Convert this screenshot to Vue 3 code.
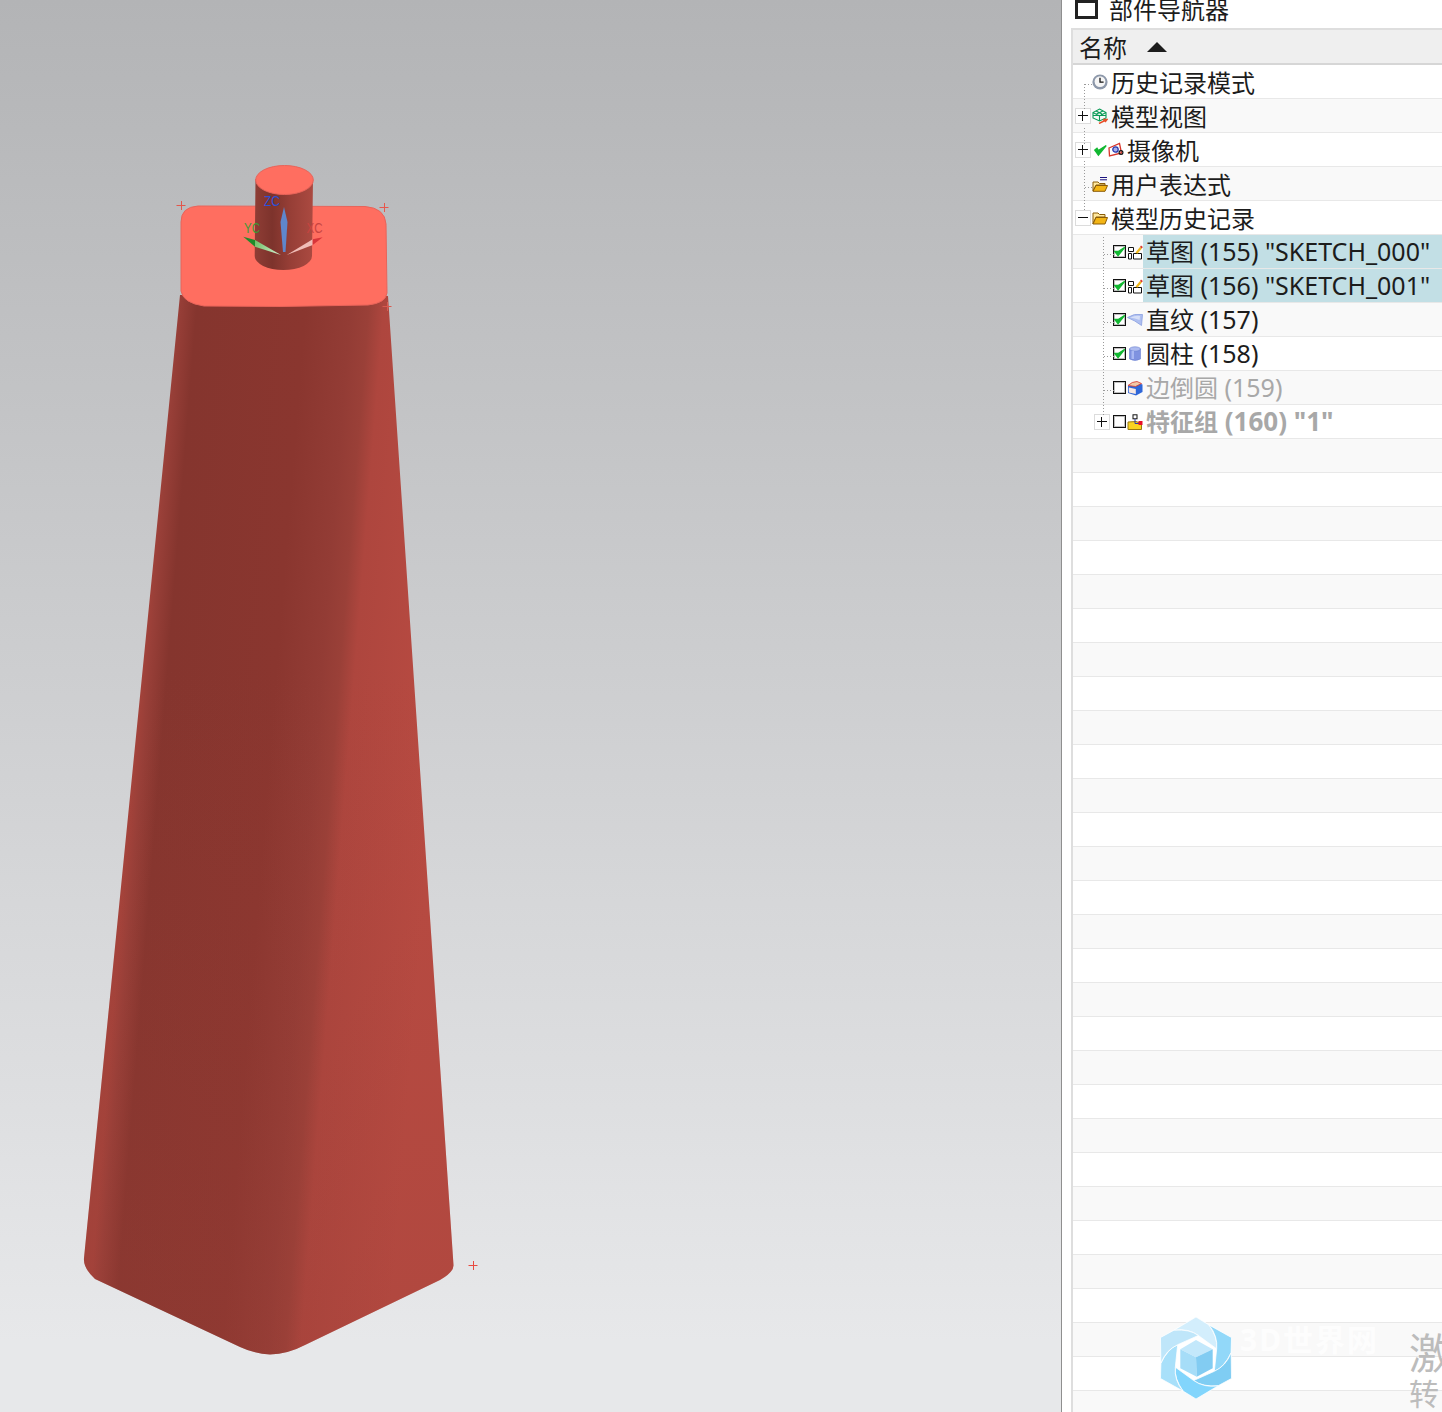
<script setup>
const rows = [
  { text: '历史记录模式', icons: ['clock'] },
  { text: '模型视图', exp: '+', icons: ['model'] },
  { text: '摄像机', exp: '+', icons: ['tick', 'camera'] },
  { text: '用户表达式', icons: ['exprFolder'] },
  { text: '模型历史记录', exp: '-', icons: ['folder'] },
  { text: '草图', rest: ' (155) "SKETCH_000"', level: 1, box: true, icons: ['sketch'], selected: true },
  { text: '草图', rest: ' (156) "SKETCH_001"', level: 1, box: true, icons: ['sketch'], selected: true },
  { text: '直纹', rest: ' (157)', level: 1, box: true, icons: ['ruled'] },
  { text: '圆柱', rest: ' (158)', level: 1, box: true, icons: ['cylinder'] },
  { text: '边倒圆', rest: ' (159)', level: 1, box: false, icons: ['blend'], muted: true },
  { text: '特征组', rest: ' (160) "1"', level: 1, box: false, exp: '+', icons: ['group'], muted: true, bold: true },
]
while (rows.length < 40) rows.push({ empty: true })

const crosses = [[181, 205, '#e2574c'], [384, 207, '#e8574c'], [387, 306, '#d85a50'], [473, 1265, '#e84a40']]
const blades = [
  { a: 0, fill: '#d3eefc' },
  { a: 60, fill: '#92d8f9' },
  { a: 120, fill: '#7fcdf3' },
  { a: 180, fill: '#82d5fc' },
  { a: 240, fill: '#a8e0fa' },
  { a: 300, fill: '#bfe6fa' },
]
const bodyPath = 'M180 295 L84 1258 Q83 1268 95 1279 L240 1347 Q255 1354 270 1354.5 Q288 1354 305 1345 L440 1280 Q454 1272 453.5 1265 L388 296 Z'
</script>

<template>
  <div class="page">
    <div class="viewport">
      <svg class="scene" viewBox="0 0 1061 1412" width="1061" height="1412">
        <defs>
          <linearGradient id="body" gradientUnits="userSpaceOnUse" x1="130" y1="800" x2="430" y2="824">
            <stop offset="0" stop-color="#a5433b" />
            <stop offset="0.03" stop-color="#983f38" />
            <stop offset="0.09" stop-color="#85352e" />
            <stop offset="0.45" stop-color="#8a362f" />
            <stop offset="0.6" stop-color="#933c35" />
            <stop offset="0.66" stop-color="#9a4038" />
            <stop offset="0.71" stop-color="#ae463e" />
            <stop offset="1" stop-color="#b94b42" />
          </linearGradient>
          <linearGradient id="lift" x1="0" y1="0" x2="0" y2="1">
            <stop offset="0.35" stop-color="#9c4038" stop-opacity="0" />
            <stop offset="1" stop-color="#9c4038" stop-opacity="0.3" />
          </linearGradient>
          <linearGradient id="neck" x1="0" y1="0" x2="1" y2="0">
            <stop offset="0" stop-color="#8f3d35" />
            <stop offset="0.3" stop-color="#7d332c" />
            <stop offset="0.6" stop-color="#963e36" />
            <stop offset="1" stop-color="#ab4a41" />
          </linearGradient>
          <linearGradient id="greenShaft" gradientUnits="userSpaceOnUse" x1="255" y1="241" x2="281" y2="255">
            <stop offset="0" stop-color="#6fbf68" />
            <stop offset="1" stop-color="#d8f2d2" />
          </linearGradient>
        </defs>

        <path fill="url(#body)" :d="bodyPath" />
        <path fill="url(#lift)" :d="bodyPath" />
        <path class="cap" d="M181 222 Q181 207 198 206 L365 206.5 Q385 208 386 224 L387 293 Q386 303 368 305 L280 306.5 L204 306 Q183 303 181 291 Z" />

        <path fill="url(#neck)" d="M255.5 179 L254.7 256 A28.6 14 0 0 0 312 256 L313 179 Z" />
        <ellipse class="cap" cx="284.5" cy="180" rx="28.8" ry="14.5" />

        <path fill="#5f86cc" d="M284 207 L287.5 222 L285.5 252 L283 252 L280.5 222 Z" />
        <path fill="#1f8a2a" d="M243.3 236.7 L255 240 L255 246.7 Z" />
        <path fill="url(#greenShaft)" d="M255 240 L281 255 L255 246.7 Z" />
        <path fill="#f0bdb7" d="M286.7 255 L312.7 239.3 L312.7 245 Z" />
        <path fill="#d8353a" d="M312.7 239.3 L322.7 237.3 L312.7 245 Z" />

        <text class="axis" x="264" y="206" fill="#2b50d8" textLength="16" lengthAdjust="spacingAndGlyphs">ZC</text>
        <text class="axis" x="244" y="233" fill="#3f9a35" textLength="16" lengthAdjust="spacingAndGlyphs">YC</text>
        <text class="axis" x="306.5" y="233" fill="#c84440" textLength="16" lengthAdjust="spacingAndGlyphs">XC</text>

        <g v-for="(c, i) in crosses" :key="i" :stroke="c[2]" stroke-width="1" fill="none">
          <path :d="`M${c[0] - 4.5} ${c[1] + 0.5} h9 M${c[0] + 0.5} ${c[1] - 4} v9`" />
        </g>
      </svg>
    </div>

    <aside class="panel">
      <div class="title">
        <span class="title-box"></span>
        <span class="title-text">部件导航器</span>
      </div>
      <div class="tree">
        <div class="head">
          <span>名称</span>
          <i class="sort"></i>
        </div>
        <div class="rows">
          <div v-for="(r, i) in rows" :key="i" class="row" :class="{ alt: i % 2 === 1 }">
            <template v-if="!r.empty">
              <div class="cells" :class="{ deep: r.level }">
                <span class="exp" :class="{ blank: !r.exp }">
                  <template v-if="r.exp">
                    <i class="h"></i><i v-if="r.exp === '+'" class="v"></i>
                  </template>
                </span>
                <span v-if="r.level" class="box">
                  <svg v-if="r.box" viewBox="0 0 10 10" width="11" height="11"><path d="M0.8 5 L3.7 8.8 L9.8 1.2 L3.9 5 Z" fill="#12b832" stroke="#12b832" stroke-width="1.2" /></svg>
                </span>
                <template v-for="ic in r.icons" :key="ic">
                  <svg v-if="ic === 'clock'" class="ic" viewBox="0 0 16 16">
                    <circle cx="8" cy="8" r="7.6" fill="#8d98aa" /><circle cx="8" cy="7.6" r="5.4" fill="#f6f6f6" />
                    <path d="M8 3.8 V8.2 H11.6" stroke="#111" stroke-width="1.3" fill="none" />
                  </svg>
                  <svg v-else-if="ic === 'model'" class="ic" viewBox="0 0 16 16">
                    <path d="M7.5 1 L14 4.5 V10 L7.5 13 L1 10 V4.5 Z M1 4.5 L7.5 8 L14 4.5 M7.5 8 V13 M4 3 L10 6 M11 3 L4.5 6 M1 7.5 H14" fill="none" stroke="#0c9c58" stroke-width="1.1" />
                    <path d="M7 15.5 L14 12 M11 11.5 L15 11.5 L13 14" fill="none" stroke="#e8502a" stroke-width="1.5" />
                  </svg>
                  <svg v-else-if="ic === 'tick'" class="ic" viewBox="0 0 16 16">
                    <path d="M2.8 8.2 L6.4 13 L14.2 3.6 L6.4 8.6 L5 6.4 Z" fill="#12b832" stroke="#12b832" stroke-width="1.4" />
                  </svg>
                  <svg v-else-if="ic === 'camera'" class="ic" viewBox="0 0 16 16">
                    <path d="M1 6 L11.5 1.5 L13.5 11 L1.5 14 Z" fill="#fff" stroke="#d8352a" stroke-width="1.3" />
                    <circle cx="7.5" cy="7.5" r="2.7" fill="#aab0e8" stroke="#2a3ab0" stroke-width="1.3" />
                    <circle cx="13" cy="10.5" r="1.9" fill="none" stroke="#111" stroke-width="1.2" />
                  </svg>
                  <svg v-else-if="ic === 'exprFolder'" class="ic" viewBox="0 0 16 16">
                    <path d="M8 1.5 H15 M8 3.8 H15" stroke="#1a1280" stroke-width="1" />
                    <path d="M1 6 H6 L7.5 7.5 H13 V9 H4 L1 15 Z" fill="#ffe9a0" stroke="#8a5c08" stroke-width="1" />
                    <path d="M4 9.5 H15.5 L13 15.3 H1 Z" fill="#f3b515" stroke="#8a5c08" stroke-width="1" />
                  </svg>
                  <svg v-else-if="ic === 'folder'" class="ic" viewBox="0 0 16 16">
                    <path d="M1 3 H6 L7.5 4.5 H13 V7 H4 L1 14 Z" fill="#ffe9a0" stroke="#8a5c08" stroke-width="1" />
                    <path d="M4 7.5 H15.5 L13 14 H1 Z" fill="#f3b515" stroke="#8a5c08" stroke-width="1" />
                  </svg>
                  <svg v-else-if="ic === 'sketch'" class="ic" viewBox="0 0 16 16">
                    <path d="M1.5 3.5 H6.5 V7.5 H1.5 Z M1.5 9.5 H4.5 V15 H1.5 Z M6.5 9.5 H14.5 V15 H6.5 Z" fill="#fff" stroke="#111" stroke-width="1" />
                    <path d="M8.5 8.5 L13 3 L14.8 4.4 L10.4 9.8 Z" fill="#f0b81a" /><path d="M13 3 L14 1.6 L15.8 3 L14.8 4.4 Z" fill="#d8352a" />
                  </svg>
                  <svg v-else-if="ic === 'ruled'" class="ic" viewBox="0 0 16 16">
                    <path d="M0.5 5.5 Q7 1 15.5 2.5 L14.5 13.5 Q8 8.5 0.5 5.5 Z" fill="#aebff0" stroke="#8aa0e0" stroke-width="0.8" />
                    <path d="M3 5.5 Q8 3.4 13 4 L12.6 8 Q8 6 3 5.5 Z" fill="#d6dff8" />
                  </svg>
                  <svg v-else-if="ic === 'cylinder'" class="ic" viewBox="0 0 16 16">
                    <path d="M2.5 3 V13 Q8 16 13.5 13 V3 Z" fill="#7f92e0" stroke="#6a7fd0" stroke-width="0.6" />
                    <ellipse cx="8" cy="3" rx="5.5" ry="2.2" fill="#aebcf0" stroke="#6a7fd0" stroke-width="0.6" />
                    <rect x="4.5" y="5" width="2.5" height="8" fill="#a9b8f2" />
                  </svg>
                  <svg v-else-if="ic === 'blend'" class="ic" viewBox="0 0 16 16">
                    <path d="M1 6 L11 3 L15.5 4.5 V12 L9 15.5 L1 13 Z" fill="#2f66d8" />
                    <path d="M1 5.5 Q5 1.5 10 1.5 L14.5 3.5 L8.5 6.5 Z" fill="#f0c9a8" stroke="#d8352a" stroke-width="0.8" />
                    <path d="M1.8 7.5 L8.8 9 V14 L1.8 12.5 Z" fill="#f7e9e4" />
                  </svg>
                  <svg v-else-if="ic === 'group'" class="ic" viewBox="0 0 16 16">
                    <path d="M1 8 L9 7.5 L14.5 9.5 V15.5 H1 Z" fill="#f9d322" stroke="#9a7a10" stroke-width="1" />
                    <rect x="6" y="0.8" width="4" height="4" fill="#fff" stroke="#111" stroke-width="1" />
                    <path d="M8 5 V9.5 H12" fill="none" stroke="#2a3ab0" stroke-width="1" />
                    <rect x="11.5" y="7" width="4" height="4" fill="#e8102a" />
                  </svg>
                </template>
                <span class="label" :class="{ selected: r.selected, muted: r.muted, bold: r.bold, top: !r.level }">{{ r.text }}<span v-if="r.rest" class="latin">{{ r.rest }}</span></span>
              </div>
            </template>
          </div>
        </div>

        <svg class="guides" width="370" height="440" viewBox="1071 0 370 440">
          <path d="M1082.5 82 V109 M1082.5 126 V143 M1082.5 159 V210 M1083 82.5 H1091 M1083 185.5 H1091" />
          <path d="M1101.5 235 V414 M1102 252.5 H1112 M1102 286.5 H1112 M1102 320.5 H1112 M1102 354.5 H1112 M1102 388.5 H1112" />
        </svg>

        <div class="mark">
          <svg class="logo" viewBox="-36 -42 72 84" width="72" height="84">
            <path fill="#fff" d="M0 -41 L35.5 -20.5 V20.5 L0 41 L-35.5 20.5 V-20.5 Z" />
            <path v-for="b in blades" :key="b.a" :transform="`rotate(${b.a})`" :fill="b.fill" stroke="#fff" stroke-width="0.7"
              d="M-22.1 -27.8 L0 -41 L13 -33 Q22 -20 20.7 -9.2 L2.4 -22.5 Q-8 -30 -22.1 -27.8 Z" />
            <path fill="#c3e8fb" d="M0 -18 L16.7 -8.7 L0 -0.7 L-15.7 -8.7 Z" />
            <path fill="#a6ddf8" d="M-15.7 -8.7 L0 -0.7 L0.7 18.7 L-15.7 10.3 Z" />
            <path fill="#82ccf2" d="M16.7 -8.7 L0 -0.7 L0.7 18.7 L16.7 10.3 Z" />
          </svg>
          <span class="mark-name">3D世界网</span>
          <div class="mark-side">
            <span class="big">激</span>
            <span class="small">转</span>
          </div>
        </div>
      </div>
    </aside>
  </div>
</template>

<style>
html, body { margin: 0; overflow: hidden; background: #fff; }
</style>

<style scoped>
.page {
  width: 1442px;
  height: 1412px;
  display: flex;
  overflow: hidden;
  font-family: "Noto Sans", "Noto Sans CJK SC", sans-serif;
  color: #1c1c1c;
}
.viewport {
  width: 1061px;
  flex: none;
  background: linear-gradient(180deg, #b3b4b6 0%, #e7e8ea 95%);
  border-right: 1px solid #8f8f8f;
}
.scene { display: block; }
.cap { fill: #ff6e60; stroke: #e8645a; stroke-width: 1; }
.axis { font-family: "Liberation Sans", sans-serif; font-size: 15px; }

.panel {
  flex: 1;
  min-width: 0;
  display: flex;
  flex-direction: column;
  padding-left: 9px;
  background: #fff;
}
.title {
  height: 28px;
  display: flex;
  align-items: flex-start;
}
.title-box {
  width: 17px;
  height: 13px;
  margin: 0 11px 0 4px;
  border: 3px solid #222;
  flex: none;
}
.title-text {
  font-size: 24px;
  line-height: 24px;
  margin-top: -2px;
}
.tree {
  flex: 1;
  min-height: 0;
  position: relative;
  border-left: 2px solid #dedede;
  border-top: 2px solid #dedede;
  overflow: hidden;
}
.head {
  background: #efefef;
  border-bottom: 2px solid #d6d6d6;
  box-sizing: border-box;
  height: 35px;
  display: flex;
  align-items: center;
  padding-left: 6px;
  font-size: 24px;
}
.sort {
  width: 0;
  height: 0;
  margin-left: 20px;
  border-left: 10px solid transparent;
  border-right: 10px solid transparent;
  border-bottom: 10px solid #1c1c1c;
}
.row {
  height: 34px;
  box-sizing: border-box;
  border-bottom: 1px solid #e8e8e8;
  background: #fff;
}
.row.alt { background: #f9f9f9; }
.cells {
  height: 100%;
  display: flex;
  align-items: center;
  padding-left: 2px;
}
.cells.deep { padding-left: 21px; }
.exp {
  width: 16px;
  height: 16px;
  flex: none;
  margin-right: 1px;
  box-sizing: border-box;
  border: 1px solid #dcdcdc;
  background: #fff;
  position: relative;
}
.exp.blank { border-color: transparent; background: transparent; }
.exp .h { position: absolute; left: 2px; right: 2px; top: 6px; height: 1px; background: #111; }
.exp .v { position: absolute; top: 2px; bottom: 2px; left: 6px; width: 1px; background: #111; }
.box {
  width: 13px;
  height: 13px;
  margin-left: 2px;
  margin-right: 1px;
  flex: none;
  box-sizing: border-box;
  border: 1px solid #111;
  box-shadow: inset 0 0 0 1px rgba(0, 0, 0, 0.25);
  background: #fff;
  display: flex;
  align-items: center;
  justify-content: center;
}
.ic { width: 16px; height: 16px; flex: none; }
.label {
  flex: 1;
  align-self: stretch;
  display: flex;
  align-items: center;
  padding: 0 0 2px 3px;
  box-sizing: border-box;
  font-size: 24px;
  white-space: pre;
}
.label.top { padding-bottom: 0; }
.latin { font-size: 25px; }
.label.selected { background: #c2dfe5; }
.label.muted { color: #a8a8a8; }
.label.bold { font-weight: 700; }
.label.bold .latin { font-size: 26px; }
.guides {
  position: absolute;
  left: 0;
  top: -28px;
  pointer-events: none;
  fill: none;
  stroke: #9a9a9a;
  stroke-width: 1;
  stroke-dasharray: 1 2;
}
.mark {
  position: absolute;
  left: 87px;
  top: 1286px;
  width: 283px;
  height: 96px;
  overflow: hidden;
  pointer-events: none;
}
.logo { position: absolute; left: 0; top: 0; }
.mark-name {
  position: absolute;
  left: 80px;
  top: 6px;
  font-size: 30px;
  line-height: 36px;
  letter-spacing: 2px;
  font-weight: 700;
  color: rgba(255, 255, 255, 0.75);
  white-space: nowrap;
}
.mark-side {
  position: absolute;
  left: 249px;
  top: 14px;
  display: flex;
  flex-direction: column;
  color: #bcbcbc;
}
.mark-side .big { font-size: 42px; line-height: 46px; }
.mark-side .small { font-size: 30px; line-height: 36px; }
</style>
